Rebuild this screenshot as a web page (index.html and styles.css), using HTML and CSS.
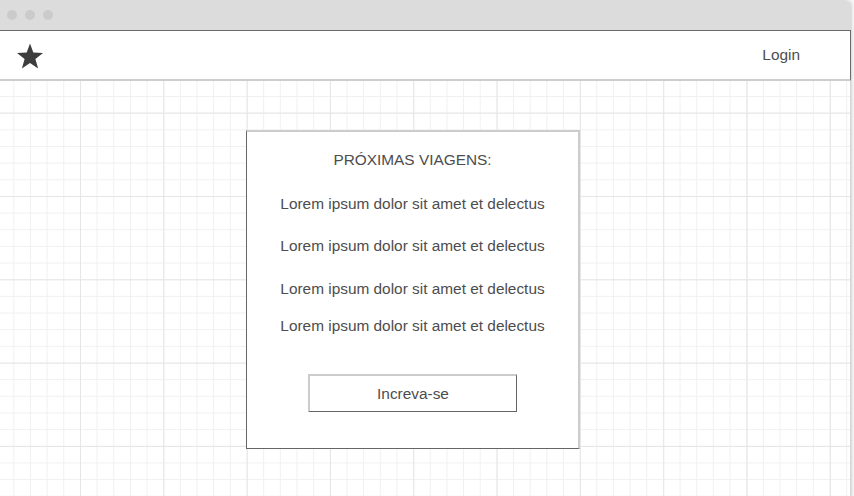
FILE: index.html
```html
<!DOCTYPE html>
<html lang="pt">
<head>
<meta charset="utf-8">
<title>Próximas viagens</title>
<link rel="stylesheet" href="styles.css">
</head>
<body>
<div class="window">
  <div class="titlebar">
    <span class="dot"></span><span class="dot"></span><span class="dot"></span>
  </div>
  <header class="nav">
    <svg class="star" width="28" height="27" viewBox="0 0 28 27" aria-hidden="true">
      <polygon points="14,0.5 17.3,9.6 27,9.9 19.4,15.9 22.1,25.5 14,20 5.9,25.5 8.6,15.9 1,9.9 10.7,9.6" fill="#3d3d3d"/>
    </svg>
    <span class="login">Login</span>
  </header>
  <main class="canvas">
    <section class="card">
      <h2 class="title">PRÓXIMAS VIAGENS:</h2>
      <p class="item item-1">Lorem ipsum dolor sit amet et delectus</p>
      <p class="item item-2">Lorem ipsum dolor sit amet et delectus</p>
      <p class="item item-3">Lorem ipsum dolor sit amet et delectus</p>
      <p class="item item-4">Lorem ipsum dolor sit amet et delectus</p>
      <button class="cta">Increva-se</button>
    </section>
  </main>
</div>
</body>
</html>
```

FILE: styles.css
```css
html, body {
  margin: 0;
  padding: 0;
}
body {
  background: #f4f4f4;
  font-family: "Liberation Sans", Arial, sans-serif;
  color: #4d4d4d;
  width: 854px;
  height: 496px;
  overflow: hidden;
}
.window {
  width: 851px;
  height: 496px;
  display: flex;
  flex-direction: column;
  background: #fff;
  border-top-right-radius: 6px;
  box-shadow: 1px 0 2px rgba(0,0,0,0.12);
}
.titlebar {
  height: 30px;
  flex: none;
  background: #dcdcdc;
  border-top-right-radius: 6px;
  display: flex;
  align-items: center;
  gap: 8px;
  padding-left: 7px;
  box-sizing: border-box;
}
.dot {
  width: 10px;
  height: 10px;
  border-radius: 50%;
  background: #cbcbcb;
}
.nav {
  height: 51px;
  flex: none;
  box-sizing: border-box;
  border-top: 1px solid #6a6a6a;
  border-bottom: 2px solid #cdcdcd;
  border-right: 1px solid #6a6a6a;
  background: #fff;
  display: flex;
  align-items: center;
  justify-content: space-between;
  padding: 0 50px 0 16px;
}
.star {
  display: block;
  margin-top: 2px;
}
.login {
  font-size: 15.4px;
  color: #4d4d4d;
}
.canvas {
  flex: 1;
  border-right: 1px solid #d6d6d6;
  background-color: #fff;
  background-image:
    linear-gradient(to right, #e6e6e6 1px, transparent 1px),
    linear-gradient(to bottom, #e6e6e6 1px, transparent 1px),
    linear-gradient(to right, #f0f0f0 1px, transparent 1px),
    linear-gradient(to bottom, #f0f0f0 1px, transparent 1px);
  background-size: 83.333px 83.333px, 83.333px 83.333px, 16.667px 16.667px, 16.667px 16.667px;
  background-position: 80px 31.67px, 80px 31.67px, 13.33px 15px, 13.33px 15px;
  padding: 49px 0 0 246px;
}
.card {
  width: 334px;
  height: 319px;
  box-sizing: border-box;
  background: #fff;
  border-top: 2px solid #cccccc;
  border-right: 2px solid #cccccc;
  border-left: 1px solid #666;
  border-bottom: 1px solid #666;
  display: flex;
  flex-direction: column;
  align-items: center;
  padding-top: 18px;
}
.title {
  margin: 0;
  font-size: 15.4px;
  font-weight: normal;
  line-height: 20px;
  color: #4d4d4d;
}
.item {
  margin: 0;
  font-size: 15.4px;
  line-height: 20px;
  color: #4d4d4d;
}
.item-1 { margin-top: 24px; }
.item-2 { margin-top: 22px; }
.item-3 { margin-top: 23px; }
.item-4 { margin-top: 17px; }
.cta {
  margin-top: 38px;
  width: 209px;
  height: 38px;
  box-sizing: border-box;
  background: #fff;
  border-top: 2px solid #cccccc;
  border-left: 2px solid #cccccc;
  border-right: 1px solid #666;
  border-bottom: 1px solid #666;
  font-family: "Liberation Sans", Arial, sans-serif;
  font-size: 15.4px;
  color: #4d4d4d;
  padding: 0;
}
```
